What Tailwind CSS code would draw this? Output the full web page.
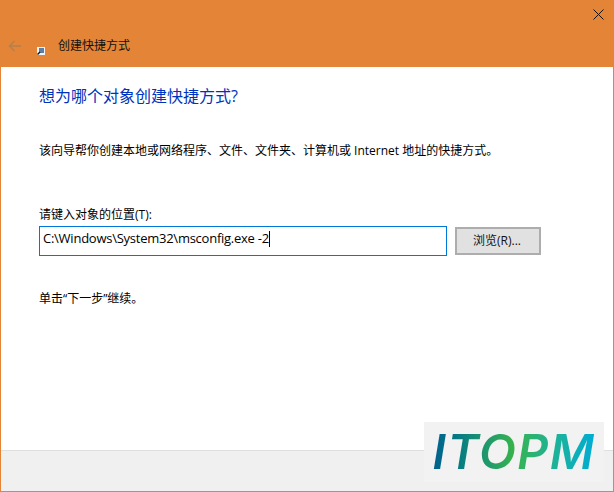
<!DOCTYPE html>
<html lang="zh-CN">

<head>
    <meta charset="UTF-8" />
    <title>创建快捷方式</title>
    <script src="https://cdn.jsdelivr.net/npm/@tailwindcss/browser@4"></script>
</head>

<body class="w-[614px] h-[492px] overflow-hidden bg-white font-['Open_Sans','Noto_Sans_CJK_SC',sans-serif] text-[12px] text-black">
    <div class="relative w-full h-full flex flex-col border border-[#e38436] border-t-0">
        <!-- title bar -->
        <div class="h-[67px] shrink-0 bg-[#e38436]">
            <div class="flex justify-end pt-[9px] pr-[9px]">
                <svg width="11" height="11" viewBox="0 0 11 11" fill="none" stroke="#111" stroke-width="1"><path d="M0.5 0.5 10.5 10.5M10.5 0.5 0.5 10.5" /></svg>
            </div>
            <div class="flex items-center pl-[7px] mt-[18px] h-[16px]">
                <svg width="14" height="12" viewBox="0 0 14 12" fill="none" stroke="#b5804f" stroke-width="1.5"><path d="M13 6H1.5M6.5 1 1.5 6l5 5" /></svg>
                <svg class="ml-[15px] mt-[10px]" width="8" height="8" viewBox="0 0 8 8"><rect width="8" height="8" fill="#f4f4f4" /><rect x="2" y="1" width="5" height="5" fill="#5b7fa8" /><path d="M0.5 7.5 3 5" stroke="#111" stroke-width="1.4" /></svg>
                <span class="ml-[13px] leading-[16px] text-[#111]">创建快捷方式</span>
            </div>
        </div>

        <!-- page content -->
        <div class="flex-1 pl-[38px] pr-[72px]">
            <h1 class="mt-[18px] text-[16px] leading-[22px] font-normal text-[#0033bc]">想为哪个对象创建快捷方式?</h1>
            <p class="mt-[35px] leading-[18px]">该向导帮你创建本地或网络程序、文件、文件夹、计算机或 Internet 地址的快捷方式。</p>
            <label class="block mt-[46px] leading-[18px]">请键入对象的位置(T):</label>
            <div class="mt-[2px] flex items-center gap-[8px]">
                <div class="w-[408px] h-[30px] shrink-0 border-[1.5px] border-[#0078d7] flex items-center pl-[3px] pb-[4px] text-[13px] tracking-[-0.25px]">
                    <span>C:\Windows\System32\msconfig.exe -2</span><span class="w-px h-[16px] bg-black"></span>
                </div>
                <button class="w-[86px] h-[28px] shrink-0 bg-[#e1e1e1] border-2 border-[#adadad] pr-[2px] text-[#111] leading-[16px]">浏览(R)...</button>
            </div>
            <p class="mt-[34px] leading-[18px]">单击“下一步”继续。</p>
        </div>

        <!-- footer -->
        <div class="h-[41px] shrink-0 bg-[#f0f0f0] border-t border-[#dfdfdf]"></div>

        <!-- watermark -->
        <div class="absolute left-[423px] top-[422px] w-[180px] h-[60px] bg-[#f2f2f2] flex items-center justify-center">
            <span class="font-['Inter',sans-serif] font-semibold italic text-[48px] leading-[60px] tracking-[1.5px] bg-linear-to-r from-[#005f8f] via-[#37b34a] to-[#00acd6] bg-clip-text text-transparent">ITOPM</span>
        </div>
    </div>
</body>

</html>
